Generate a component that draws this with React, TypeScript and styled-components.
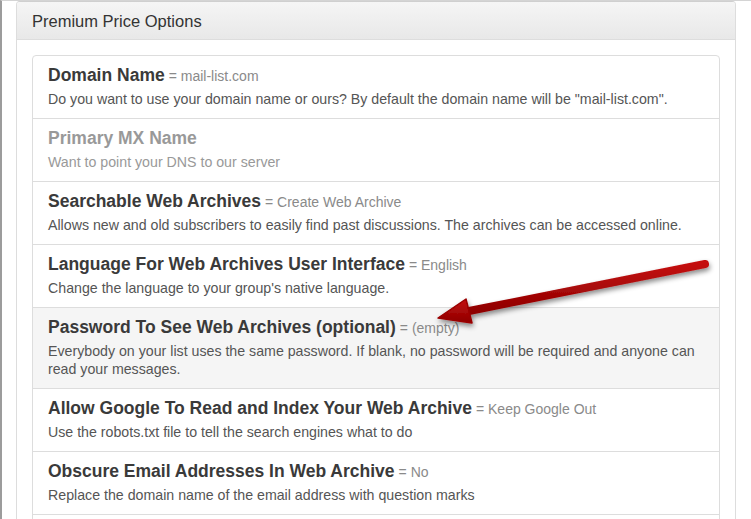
import React from "react";
import styled, { createGlobalStyle } from "styled-components";

const Global = createGlobalStyle`
  html, body { margin: 0; padding: 0; height: 100%; overflow: hidden; background: #fff; }
  body { font-family: "Liberation Sans", Arial, sans-serif; color: #333; }
`;

const Page = styled.div`
  position: relative;
  height: 519px;
  overflow: hidden;
  border-left: 2px solid #9c9c9c;
  border-top: 1px solid #d4d4d4;
  padding-left: 14px;
  box-sizing: border-box;
`;

const Panel = styled.div`
  width: 720px;
  box-sizing: border-box;
  border: 1px solid #dddddd;
  border-top-color: #cfcfcf;
  border-radius: 4px;
  background: #fff;
`;

const PanelHeading = styled.div`
  padding: 10px 15px 9px;
  background: linear-gradient(to bottom, #f5f5f5 0%, #e8e8e8 100%);
  border-bottom: 1px solid #dddddd;
  border-radius: 3px 3px 0 0;
`;

const PanelTitle = styled.h3`
  margin: 0;
  font-size: 16.5px;
  line-height: 18px;
  font-weight: 400;
  color: #333;
`;

const PanelBody = styled.div`
  padding: 15px;
`;

const ListGroup = styled.div`
  display: flex;
  flex-direction: column;
`;

const Item = styled.div<{ $active?: boolean }>`
  padding: 10px 15px;
  border: 1px solid #dddddd;
  margin-bottom: -1px;
  background: ${(p) => (p.$active ? "#f5f5f5" : "#fff")};
  &:first-child { border-radius: 4px 4px 0 0; }
`;

const Heading = styled.h4<{ $muted?: boolean }>`
  margin: 0 0 5px;
  font-size: 17.5px;
  line-height: 19px;
  height: 19px;
  font-weight: 700;
  color: ${(p) => (p.$muted ? "#999" : "#3a3a3a")};
`;

const Value = styled.span`
  font-size: 14px;
  line-height: 1;
  font-weight: 400;
  color: #8a8a8a;
  margin-left: 4px;
`;

const Text = styled.p<{ $muted?: boolean }>`
  margin: 0;
  font-size: 14.2px;
  line-height: 18px;
  color: ${(p) => (p.$muted ? "#999" : "#555")};
`;

const ArrowLayer = styled.svg`
  position: absolute;
  left: 0;
  top: 0;
  pointer-events: none;
`;

type Row = { title: string; value?: string; text: string; muted?: boolean; active?: boolean };

const rows: Row[] = [
  { title: "Domain Name", value: "= mail-list.com", text: 'Do you want to use your domain name or ours? By default the domain name will be "mail-list.com".' },
  { title: "Primary MX Name", text: "Want to point your DNS to our server", muted: true },
  { title: "Searchable Web Archives", value: "= Create Web Archive", text: "Allows new and old subscribers to easily find past discussions. The archives can be accessed online." },
  { title: "Language For Web Archives User Interface", value: "= English", text: "Change the language to your group's native language." },
  { title: "Password To See Web Archives (optional)", value: "= (empty)", text: "Everybody on your list uses the same password. If blank, no password will be required and anyone can read your messages.", active: true },
  { title: "Allow Google To Read and Index Your Web Archive", value: "= Keep Google Out", text: "Use the robots.txt file to tell the search engines what to do" },
  { title: "Obscure Email Addresses In Web Archive", value: "= No", text: "Replace the domain name of the email address with question marks" },
];

export default function App() {
  return (
    <>
      <Global />
      <Page>
        <Panel>
          <PanelHeading>
            <PanelTitle>Premium Price Options</PanelTitle>
          </PanelHeading>
          <PanelBody>
            <ListGroup>
              {rows.map((r) => (
                <Item key={r.title} $active={r.active}>
                  <Heading $muted={r.muted}>
                    {r.title}
                    {r.value && <Value>{r.value}</Value>}
                  </Heading>
                  <Text $muted={r.muted}>{r.text}</Text>
                </Item>
              ))}
              <Item aria-hidden="true" />
            </ListGroup>
          </PanelBody>
        </Panel>
        <ArrowLayer width="751" height="519" viewBox="0 0 751 519">
          <defs>
            <linearGradient id="ag" x1="0" y1="0" x2="0" y2="1">
              <stop offset="0" stopColor="#c41010" />
              <stop offset="1" stopColor="#8e0000" />
            </linearGradient>
            <filter id="sh" x="-10%" y="-30%" width="120%" height="160%">
              <feDropShadow dx="1" dy="3" stdDeviation="2.5" floodColor="#000" floodOpacity="0.45" />
            </filter>
          </defs>
          <g filter="url(#sh)">
            <line x1="703" y1="263" x2="462" y2="311" stroke="url(#ag)" strokeWidth="8" strokeLinecap="round" />
            <polygon points="436,317 464,298 470,322" fill="url(#ag)" stroke="#9a0000" strokeWidth="1.5" strokeLinejoin="round" />
          </g>
        </ArrowLayer>
      </Page>
    </>
  );
}
